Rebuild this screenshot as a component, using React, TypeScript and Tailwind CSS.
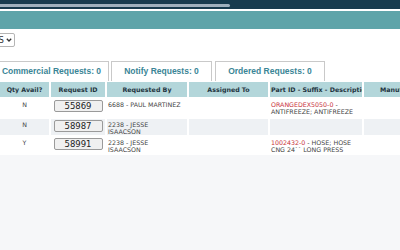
import React from "react";

const rows = [
  { qty: "N", id: "55869", by: ["6688 - PAUL MARTINEZ"], part: { code: "ORANGEDEX5050-0", rest: " -", line2: "ANTIFREEZE; ANTIFREEZE" }, alt: false, h: "h-[18px]" },
  { qty: "N", id: "58987", by: ["2238 - JESSE", "ISAACSON"], part: null, alt: true, h: "h-[16px]" },
  { qty: "Y", id: "58991", by: ["2238 - JESSE", "ISAACSON"], part: { code: "1002432-0", rest: " - HOSE; HOSE", line2: "CNG 24`` LONG PRESS" }, alt: false, h: "h-[15px]" },
];

export default function App() {
  return (
    <div className="w-[400px] h-[250px] overflow-hidden bg-[#f6f7f9] font-['DejaVu_Sans',sans-serif]">
      <div className="h-[9px] bg-[#173b4e] pt-[4px]">
        <div className="h-[3px] w-[230px] rounded-r-full bg-[#9fb0bd]" />
      </div>
      <div className="h-[2px] bg-white" />
      <div className="h-[18px] bg-[#5fa4a9]" />
      <div className="bg-white pt-[4px]">
        <div className="ml-[-4px] flex h-[14px] w-[19px] items-center justify-end gap-[2px] rounded-[2px] border border-[#b5b5b5] bg-white pr-[2px] text-[8.5px] leading-none text-[#333]">
          <span>S</span>
          <svg width="6" height="4" viewBox="0 0 6 4"><path d="M0.8 0.8 L3 3 L5.2 0.8" stroke="#333" strokeWidth="1.3" fill="none" /></svg>
        </div>
        <div className="mt-[14px] flex h-[20px] items-stretch ml-[-6px] font-['Liberation_Sans',sans-serif] font-bold">
          <div className="flex w-[115px] items-center justify-center border border-b-0 border-[#c9c9c9] text-[8.5px] text-[#3a8596]">Commercial Requests: 0</div>
          <div className="ml-[2px] flex w-[101px] items-center justify-center border border-b-0 border-[#c9c9c9] text-[8.5px] text-[#3a8596]">Notify Requests: 0</div>
          <div className="ml-[3px] flex w-[110px] items-center justify-center border border-b-0 border-[#c9c9c9] text-[8.5px] text-[#3a8596]">Ordered Requests: 0</div>
        </div>
        <table className="ml-[-2px] mt-[-1px] w-[448px] table-fixed border-separate border-spacing-[2px] text-[6.3px] text-[#444]">
          <colgroup>
            <col className="w-[49px]" />
            <col className="w-[54px]" />
            <col className="w-[80px]" />
            <col className="w-[79px]" />
            <col className="w-[92px]" />
            <col className="w-[80px]" />
          </colgroup>
          <thead>
            <tr className="h-[15px] bg-[#b3d6da] font-bold text-[#1f3440]">
              <th className="whitespace-nowrap px-[1px] text-center">Qty Avail?</th>
              <th className="whitespace-nowrap px-[1px] text-center">Request ID</th>
              <th className="whitespace-nowrap px-[1px] text-center">Requested By</th>
              <th className="whitespace-nowrap px-[1px] text-center">Assigned To</th>
              <th className="overflow-hidden whitespace-nowrap px-[1px] text-left">Part ID - Suffix - Description</th>
              <th className="overflow-hidden whitespace-nowrap px-[1px] text-left pl-[16px]">Manufacturer</th>
            </tr>
          </thead>
          <tbody>
            {rows.map((r) => (
              <tr key={r.id} className={`${r.h} ${r.alt ? "bg-[#eef1f4]" : "bg-white"}`}>
                <td className="pt-[2px] text-center align-top leading-[7px]">{r.qty}</td>
                <td className="pt-[1px] align-top">
                  <div className="mx-auto flex h-[12px] w-[49px] items-center justify-center rounded-[2px] border border-[#9a9a9a] bg-[#f0f0f0] text-[8.5px] leading-none text-[#222]">{r.id}</div>
                </td>
                <td className="pt-[2px] pl-[1px] align-top leading-[7px]">
                  {r.by.map((l) => (<div key={l}>{l}</div>))}
                </td>
                <td />
                <td className="pt-[2px] pl-[1px] align-top leading-[7px]">
                  {r.part ? (
                    <>
                      <div><span className="text-[#c8323c]">{r.part.code}</span>{r.part.rest}</div>
                      <div>{r.part.line2}</div>
                    </>
                  ) : null}
                </td>
                <td />
              </tr>
            ))}
          </tbody>
        </table>
      </div>
    </div>
  );
}
